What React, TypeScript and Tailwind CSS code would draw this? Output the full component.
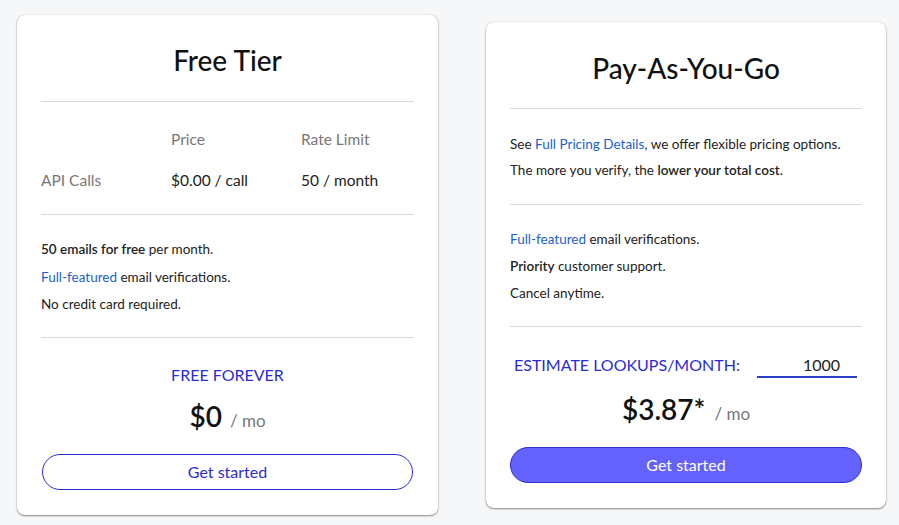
import React from "react";

const font = { fontFamily: "Lato, 'Noto Sans', sans-serif" };

function Divider() {
  return <div className="h-px bg-[#d9d9d9]" />;
}

export default function App() {
  return (
    <div className="min-h-[525px] w-[899px] bg-[#f6f7f9] flex items-start pl-[17px] pt-[15px] gap-[48px] text-[#1a1a1a]" style={font}>
      {/* Free Tier card */}
      <div className="w-[421px] h-[500px] bg-white rounded-[8px] shadow-[0_1px_2px_rgba(0,0,0,0.45),0_0_1px_rgba(0,0,0,0.25)] px-[24px] pt-[27px] flex flex-col">
        <div className="text-[28px] leading-[36px] font-medium text-center text-[#111]">Free Tier</div>
        <div className="mt-[23px]"><Divider /></div>
        <div className="grid grid-cols-[130px_130px_1fr] gap-y-[21px] pt-[27px] pb-[24px] text-[15.5px] leading-[20px]">
          <div />
          <div className="text-[#777]">Price</div>
          <div className="text-[#777]">Rate Limit</div>
          <div className="text-[#777]">API Calls</div>
          <div className="text-[#222]">$0.00 / call</div>
          <div className="text-[#222]">50 / month</div>
        </div>
        <Divider />
        <div className="pt-[21px] pb-[18px] text-[13.5px] leading-[27.5px] text-[#222]">
          <div><span className="font-semibold">50 emails for free</span> per month.</div>
          <div><span className="text-[#1a5fd0]">Full-featured</span> email verifications.</div>
          <div>No credit card required.</div>
        </div>
        <Divider />
        <div className="pt-[27px] text-center text-[16px] leading-[20px] text-[#2b2bd6]">FREE FOREVER</div>
        <div className="mt-[13px] flex items-baseline justify-center gap-[8px] h-[36px]">
          <span className="text-[28px] leading-[36px] font-semibold text-[#111]">$0</span>
          <span className="text-[17px] text-[#777]">/ mo</span>
        </div>
        <button className="mt-[20px] mx-[1px] h-[36px] rounded-full border border-[#2b2bd6] bg-white text-[#2b2bd6] text-[16px]" style={font}>
          Get started
        </button>
      </div>

      {/* Pay-As-You-Go card */}
      <div className="mt-[7px] w-[400px] h-[486px] bg-white rounded-[8px] shadow-[0_1px_2px_rgba(0,0,0,0.45),0_0_1px_rgba(0,0,0,0.25)] px-[24px] pt-[28px] flex flex-col">
        <div className="text-[28px] leading-[36px] font-medium text-center text-[#111]">Pay-As-You-Go</div>
        <div className="mt-[22px]"><Divider /></div>
        <div className="pt-[22px] pb-[21px] text-[13.5px] leading-[26px] text-[#222]">
          <div>See <span className="text-[#1a5fd0]">Full Pricing Details</span>, we offer flexible pricing options.</div>
          <div>The more you verify, the <span className="font-semibold">lower your total cost</span>.</div>
        </div>
        <Divider />
        <div className="pt-[21px] pb-[19px] text-[13.5px] leading-[27px] text-[#222]">
          <div><span className="text-[#1a5fd0]">Full-featured</span> email verifications.</div>
          <div><span className="font-semibold">Priority</span> customer support.</div>
          <div>Cancel anytime.</div>
        </div>
        <Divider />
        <div className="pt-[25px] flex items-center justify-between pl-[4px] pr-[5px]">
          <span className="text-[16px] leading-[20px] text-[#2b2bd6]">ESTIMATE LOOKUPS/MONTH:</span>
          <div className="w-[100px] h-[26px] pt-[3px] border-b-2 border-[#2b3fc9] text-right pr-[17px] text-[16px] leading-[20px] text-[#222]">1000</div>
        </div>
        <div className="mt-[13px] flex items-baseline justify-center gap-[9px] h-[36px]">
          <span className="text-[28px] leading-[36px] font-semibold text-[#111]">$3.87*</span>
          <span className="text-[17px] text-[#777]">/ mo</span>
        </div>
        <button className="mt-[20px] h-[36px] rounded-full border border-[#2f2fc9] bg-[#6461fc] text-white text-[16px]" style={font}>
          Get started
        </button>
      </div>
    </div>
  );
}
